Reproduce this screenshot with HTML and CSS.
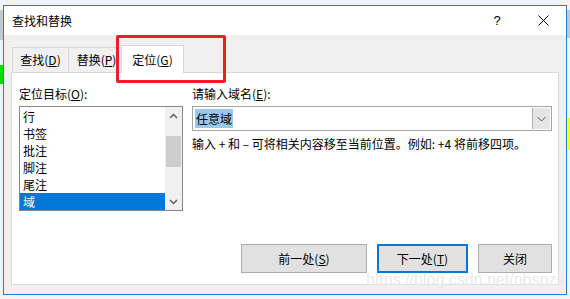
FILE: index.html
```html
<!DOCTYPE html>
<html>
<head>
  <title>查找和替换</title>
  <link rel="stylesheet" href="styles.css">
</head>
<body>
  <div class="desk-mark green"></div>
  <div class="desk-mark grey-left"></div>
  <div class="desk-mark yellow"></div>
  <div class="desk-mark grey-right"></div>

  <div class="window">
    <div class="titlebar">
      <span class="title">查找和替换</span>
      <span class="cap-btn">?</span>
      <span class="cap-btn">
        <svg width="11" height="11" viewBox="0 0 11 11"><path d="M0.5 0.5 L10.5 10.5 M10.5 0.5 L0.5 10.5" stroke="#000" stroke-width="1" fill="none"/></svg>
      </span>
    </div>

    <div class="dialog">
      <div class="tabs">
        <div class="tab">查找(<u>D</u>)</div>
        <div class="tab">替换(<u>P</u>)</div>
        <div class="tab active">定位(<u>G</u>)</div>
      </div>

      <div class="panel">
        <div class="fields">
          <div class="col">
            <div class="label">定位目标(<u>O</u>):</div>
            <div class="listbox">
              <div class="items">
                <div class="item">行</div>
                <div class="item">书签</div>
                <div class="item">批注</div>
                <div class="item">脚注</div>
                <div class="item">尾注</div>
                <div class="item selected">域</div>
              </div>
              <div class="scrollbar">
                <div class="arrow">
                  <svg width="9" height="6" viewBox="0 0 9 6"><path d="M1 5 L4.5 1.5 L8 5" stroke="#606060" stroke-width="1.5" fill="none"/></svg>
                </div>
                <div class="track"><div class="thumb"></div></div>
                <div class="arrow">
                  <svg width="9" height="6" viewBox="0 0 9 6"><path d="M1 1 L4.5 4.5 L8 1" stroke="#606060" stroke-width="1.5" fill="none"/></svg>
                </div>
              </div>
            </div>
          </div>

          <div class="col">
            <div class="label">请输入域名(<u>E</u>):</div>
            <div class="combo">
              <div class="combo-text"><span class="sel-text">任意域</span></div>
              <div class="combo-btn">
                <svg width="9" height="6" viewBox="0 0 9 6"><path d="M0.5 1 L4.5 5 L8.5 1" stroke="#555" stroke-width="1" fill="none"/></svg>
              </div>
            </div>
            <div class="hint">输入 + 和 – 可将相关内容移至当前位置。例如: +4 将前移四项。</div>
          </div>
        </div>

        <div class="buttons">
          <div class="btn prev">前一处(<u>S</u>)</div>
          <div class="btn next default">下一处(<u>T</u>)</div>
          <div class="btn close">关闭</div>
        </div>
      </div>
    </div>
  </div>

  <div class="redbox"></div>
  <div class="watermark">https://blog.csdn.net/nbspzs</div>
</body>
</html>
```

FILE: styles.css
```css
body {
  margin: 0;
  width: 570px;
  height: 299px;
  overflow: hidden;
  position: relative;
  background-color: #f3f3f3;
  font-family: "Noto Sans CJK SC", "Noto Sans", sans-serif;
  font-size: 12px;
  color: #000;
}

u {
  text-decoration: underline;
  text-underline-offset: 1px;
}

/* bits of the document behind the dialog */
.desk-mark {
  position: absolute;
}
.desk-mark.green {
  left: 0;
  top: 65px;
  width: 3px;
  height: 19px;
  background-color: #00e000;
}
.desk-mark.grey-left {
  left: 0;
  top: 10px;
  width: 3px;
  height: 30px;
  background-color: #c8c8c8;
}
.desk-mark.yellow {
  left: 567px;
  top: 118px;
  width: 3px;
  height: 32px;
  background-color: #ffff00;
}
.desk-mark.grey-right {
  left: 567px;
  top: 10px;
  width: 3px;
  height: 28px;
  background-color: #c8c8c8;
}

.window {
  margin: 5px 0 0 3px;
  width: 564px;
  height: 290px;
  box-sizing: border-box;
  border: 1px solid #2b7bcf;
  background-color: #f0f0f0;
  position: relative;
  display: flex;
  flex-direction: column;
}

.titlebar {
  height: 29px;
  background-color: #fff;
  display: flex;
  align-items: center;
  padding-left: 8px;
}
.title {
  flex: 1;
  line-height: 16px;
}
.cap-btn {
  width: 46px;
  height: 29px;
  display: flex;
  align-items: center;
  justify-content: center;
  font-family: "Liberation Sans", sans-serif;
  font-size: 13px;
}

.dialog {
  flex: 1;
  padding: 10px 0 0 7px;
}

.tabs {
  display: flex;
  align-items: flex-end;
  height: 27px;
  padding-left: 1px;
}
.tab {
  height: 24px;
  box-sizing: content-box;
  border: 1px solid #d9d9d9;
  border-bottom: none;
  background-color: #f0f0f0;
  display: flex;
  align-items: center;
  justify-content: center;
  width: 55px;
  margin-right: -1px;
  line-height: 16px;
}
.tab.active {
  position: relative;
  z-index: 1;
  height: 27px;
  width: 61px;
  margin-left: -3px;
  margin-bottom: -1px;
  background-color: #fff;
  padding-bottom: 0;
}

.panel {
  width: 548px;
  height: 213px;
  box-sizing: border-box;
  border: 1px solid #d9d9d9;
  background-color: #fff;
  display: flex;
  flex-direction: column;
  padding: 13px 6px 11px 7px;
}

.fields {
  display: grid;
  grid-template-columns: 164px 360px;
  column-gap: 9px;
}

.label {
  line-height: 16px;
  margin-bottom: 4px;
}

.listbox {
  height: 105px;
  box-sizing: border-box;
  border: 1px solid #828790;
  display: flex;
}
.items {
  flex: 1;
  padding-top: 1px;
}
.item {
  height: 17px;
  line-height: 17px;
  padding-left: 3px;
}
.item.selected {
  background-color: #0078d7;
  color: #fff;
}
.scrollbar {
  width: 17px;
  background-color: #f0f0f0;
  display: flex;
  flex-direction: column;
}
.arrow {
  height: 17px;
  display: flex;
  align-items: center;
  justify-content: center;
}
.track {
  flex: 1;
  padding: 12px 1px 0 1px;
}
.thumb {
  height: 31px;
  background-color: #cdcdcd;
}

.combo {
  height: 25px;
  box-sizing: border-box;
  border: 1px solid #a5a5a5;
  display: flex;
}
.combo-text {
  flex: 1;
  padding: 2px 0 0 2px;
}
.sel-text {
  display: inline-block;
  line-height: 19px;
  padding: 0 1px;
  background-color: #99c9ef;
}
.combo-btn {
  width: 17px;
  margin: 1px;
  border-left: 1px solid #acacac;
  background-color: #e5e5e5;
  display: flex;
  align-items: center;
  justify-content: center;
}

.hint {
  margin-top: 5px;
  line-height: 16px;
  white-space: nowrap;
}

.buttons {
  margin-top: auto;
  display: flex;
  justify-content: flex-end;
  gap: 10px;
}
.btn {
  height: 29px;
  box-sizing: border-box;
  border: 1px solid #adadad;
  background-color: #e1e1e1;
  display: flex;
  align-items: center;
  justify-content: center;
  line-height: 16px;
}
.btn.prev {
  width: 126px;
}
.btn.next {
  width: 91px;
}
.btn.close {
  width: 74px;
}
.btn.default {
  border: 2px solid #0078d7;
}

.redbox {
  position: absolute;
  left: 116px;
  top: 35px;
  width: 110px;
  height: 48px;
  box-sizing: border-box;
  border: 3px solid #ec1f26;
  border-radius: 2px;
}

.watermark {
  position: absolute;
  left: 366px;
  top: 271px;
  font-family: "Liberation Sans", sans-serif;
  font-size: 16px;
  color: rgba(200, 200, 200, 0.4);
  text-shadow: 0 0 1px rgba(255, 255, 255, 0.9);
}
```
